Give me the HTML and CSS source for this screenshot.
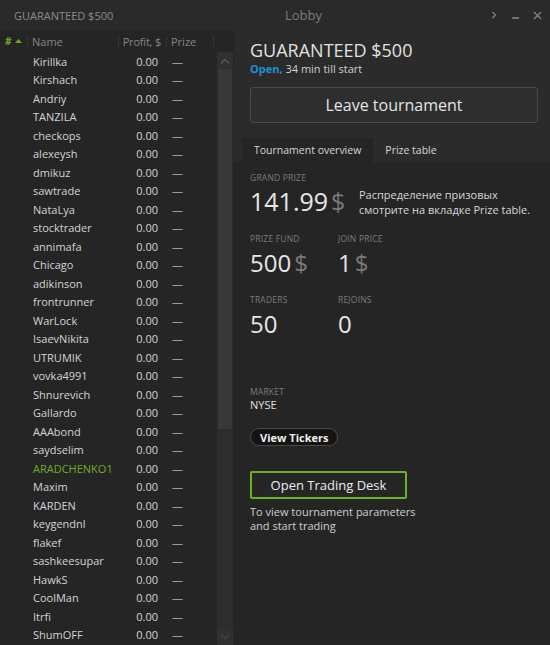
FILE: index.html
```html
<!DOCTYPE html>
<html>
<head>
<meta charset="utf-8">
<link rel="stylesheet" href="styles.css">
</head>
<body>
<div class="window">
  <div class="titlebar">
    <div class="tb-left">GUARANTEED $500</div>
    <div class="tb-center">Lobby</div>
    <div class="tb-icons">
      <svg width="8" height="8" viewBox="0 0 8 8"><path d="M2.5 1 L5.5 4 L2.5 7" fill="none" stroke="#8a8a8a" stroke-width="1.1"/></svg>
      <svg width="9" height="8" viewBox="0 0 9 8"><path d="M1 7 H8" stroke="#8a8a8a" stroke-width="1.5"/></svg>
      <svg width="9" height="9" viewBox="0 0 9 9"><path d="M1 1 L8 8 M8 1 L1 8" stroke="#8a8a8a" stroke-width="1.1"/></svg>
    </div>
  </div>
  <div class="main">
    <div class="left">
      <div class="thead">
        <span class="hash">#</span>
        <svg class="sort" width="7" height="4" viewBox="0 0 7 4"><path d="M0 4 L3.5 0 L7 4 Z" fill="#6aa824"/></svg>
        <span class="sep s1"></span>
        <span class="h-name">Name</span>
        <span class="sep s2"></span>
        <span class="h-profit">Profit, $</span>
        <span class="sep s3"></span>
        <span class="h-prize">Prize</span>
        <span class="sep s4"></span>
      </div>
      <div class="tbody">
        <div class="rows">
          <div class="row"><span class="n">Kirillka</span><span class="p">0.00</span><span class="d">—</span></div>
          <div class="row"><span class="n">Kirshach</span><span class="p">0.00</span><span class="d">—</span></div>
          <div class="row"><span class="n">Andriy</span><span class="p">0.00</span><span class="d">—</span></div>
          <div class="row"><span class="n">TANZILA</span><span class="p">0.00</span><span class="d">—</span></div>
          <div class="row"><span class="n">checkops</span><span class="p">0.00</span><span class="d">—</span></div>
          <div class="row"><span class="n">alexeysh</span><span class="p">0.00</span><span class="d">—</span></div>
          <div class="row"><span class="n">dmikuz</span><span class="p">0.00</span><span class="d">—</span></div>
          <div class="row"><span class="n">sawtrade</span><span class="p">0.00</span><span class="d">—</span></div>
          <div class="row"><span class="n">NataLya</span><span class="p">0.00</span><span class="d">—</span></div>
          <div class="row"><span class="n">stocktrader</span><span class="p">0.00</span><span class="d">—</span></div>
          <div class="row"><span class="n">annimafa</span><span class="p">0.00</span><span class="d">—</span></div>
          <div class="row"><span class="n">Chicago</span><span class="p">0.00</span><span class="d">—</span></div>
          <div class="row"><span class="n">adikinson</span><span class="p">0.00</span><span class="d">—</span></div>
          <div class="row"><span class="n">frontrunner</span><span class="p">0.00</span><span class="d">—</span></div>
          <div class="row"><span class="n">WarLock</span><span class="p">0.00</span><span class="d">—</span></div>
          <div class="row"><span class="n">IsaevNikita</span><span class="p">0.00</span><span class="d">—</span></div>
          <div class="row"><span class="n">UTRUMIK</span><span class="p">0.00</span><span class="d">—</span></div>
          <div class="row"><span class="n">vovka4991</span><span class="p">0.00</span><span class="d">—</span></div>
          <div class="row"><span class="n">Shnurevich</span><span class="p">0.00</span><span class="d">—</span></div>
          <div class="row"><span class="n">Gallardo</span><span class="p">0.00</span><span class="d">—</span></div>
          <div class="row"><span class="n">AAAbond</span><span class="p">0.00</span><span class="d">—</span></div>
          <div class="row"><span class="n">saydselim</span><span class="p">0.00</span><span class="d">—</span></div>
          <div class="row me"><span class="n">ARADCHENKO1</span><span class="p">0.00</span><span class="d">—</span></div>
          <div class="row"><span class="n">Maxim</span><span class="p">0.00</span><span class="d">—</span></div>
          <div class="row"><span class="n">KARDEN</span><span class="p">0.00</span><span class="d">—</span></div>
          <div class="row"><span class="n">keygendnl</span><span class="p">0.00</span><span class="d">—</span></div>
          <div class="row"><span class="n">flakef</span><span class="p">0.00</span><span class="d">—</span></div>
          <div class="row"><span class="n">sashkeesupar</span><span class="p">0.00</span><span class="d">—</span></div>
          <div class="row"><span class="n">HawkS</span><span class="p">0.00</span><span class="d">—</span></div>
          <div class="row"><span class="n">CoolMan</span><span class="p">0.00</span><span class="d">—</span></div>
          <div class="row"><span class="n">Itrfi</span><span class="p">0.00</span><span class="d">—</span></div>
          <div class="row"><span class="n">ShumOFF</span><span class="p">0.00</span><span class="d">—</span></div>
        </div>
        <div class="scrollbar">
          <div class="sb-btn"><svg width="10" height="6" viewBox="0 0 10 6"><path d="M1 5.5 L5 1.5 L9 5.5" fill="none" stroke="#555" stroke-width="1.6"/></svg></div>
          <div class="sb-thumb"></div>
          <div class="sb-track"></div>
          <div class="sb-btn"><svg width="10" height="6" viewBox="0 0 10 6"><path d="M1 0.5 L5 4.5 L9 0.5" fill="none" stroke="#444" stroke-width="1.6"/></svg></div>
        </div>
      </div>
    </div>
    <div class="right">
      <div class="top">
        <h1 class="title">GUARANTEED $500</h1>
        <div class="status"><span class="open">Open,</span> 34 min till start</div>
        <button class="leave">Leave tournament</button>
        <div class="tabs">
          <div class="tab active">Tournament overview</div>
          <div class="tab">Prize table</div>
        </div>
      </div>
      <div class="content">
        <div class="label">GRAND PRIZE</div>
        <div class="grand">
          <div class="big">141.99<span class="cur">$</span></div>
          <div class="note">Распределение призовых<br>смотрите на вкладке Prize table.</div>
        </div>
        <div class="stats">
          <div class="stat"><div class="label">PRIZE FUND</div><div class="val">500<span class="cur">$</span></div></div>
          <div class="stat"><div class="label">JOIN PRICE</div><div class="val">1<span class="cur">$</span></div></div>
          <div class="stat"><div class="label">TRADERS</div><div class="val">50</div></div>
          <div class="stat"><div class="label">REJOINS</div><div class="val">0</div></div>
        </div>
        <div class="label market">MARKET</div>
        <div class="market-val">NYSE</div>
        <button class="tickers">View Tickers</button>
        <button class="desk">Open Trading Desk</button>
        <div class="hint">To view tournament parameters<br>and start trading</div>
      </div>
    </div>
  </div>
</div>
</body>
</html>
```
FILE: styles.css
```css
* { box-sizing: border-box; }
html, body { margin: 0; padding: 0; }
body {
  width: 550px;
  height: 645px;
  overflow: hidden;
  background: #252525;
  font-family: "Open Sans", "Noto Sans", sans-serif;
  color: #d8d8d8;
}
.window { display: flex; flex-direction: column; height: 645px; }
.titlebar {
  height: 30px;
  background: #2a2a2a;
  display: flex;
  align-items: center;
  padding: 0 0 0 14px;
}
.tb-left { font-size: 11px; color: #8a8a8a; width: 140px; }
.tb-center { font-size: 13px; color: #7a7a7a; flex: 1; padding-left: 131px; }
.tb-icons { display: flex; align-items: center; gap: 13px; padding-right: 8px; }
.main { flex: 1; display: flex; min-height: 0; }
.left { width: 234px; background: #252525; display: flex; flex-direction: column; }
.thead {
  height: 22px;
  display: flex;
  align-items: center;
  font-size: 11px;
  color: #858585;
  padding-left: 5px;
  white-space: nowrap;
}
.hash { color: #6aa824; font-weight: bold; font-size: 10px; width: 10px; }
.sort { margin-right: 5px; }
.sep { width: 1px; height: 9px; border-left: 1px dotted #4a4a4a; }
.s1 { margin-right: 4px; }
.h-name { width: 86px; }
.h-profit { width: 42px; text-align: right; letter-spacing: -0.2px; }
.s3 { margin-left: 5px; }
.h-prize { padding-left: 4px; width: 46px; }
.tbody { flex: 1; display: flex; min-height: 0; }
.rows { flex: 1; font-size: 11px; }
.row {
  height: 18.5px;
  display: flex;
  align-items: center;
  color: #d4d4d4;
}
.row .n { width: 124px; padding-left: 33px; }
.row .p { width: 34px; text-align: right; }
.row .d { padding-left: 14px; color: #9a9a9a; }
.row.me .n { color: #6fae23; }
.scrollbar {
  width: 16px;
  margin-right: 1px;
  background: #2d2d2d;
  display: flex;
  flex-direction: column;
}
.sb-btn { height: 17px; display: flex; align-items: center; justify-content: center; background: #303030; }
.sb-thumb { height: 360px; margin: 0 1px; background: #383838; }
.sb-track { flex: 1; }
.right { flex: 1; background: #2b2b2b; display: flex; flex-direction: column; }
.top { padding: 10px 12px 0 16px; }
.title { margin: 0; font-size: 18px; font-weight: normal; color: #e2e2e2; line-height: 21px; }
.status { font-size: 11px; color: #d0d0d0; line-height: 14px; margin-top: 1px; }
.open { color: #1e8fd6; font-weight: bold; }
.leave {
  display: block;
  width: 288px;
  height: 36px;
  margin-top: 11px;
  background: #2e2e2e;
  border: 1px solid #4a4a4a;
  border-radius: 3px;
  color: #e4e4e4;
  font-family: inherit;
  font-size: 16px;
}
.tabs { display: flex; margin: 15px 0 0 -8px; height: 24px; }
.tab { font-size: 10.5px; color: #d6d6d6; padding: 0 12px; display: flex; align-items: center; }
.tab.active { background: #252525; }
.content { flex: 1; background: #252525; padding: 11px 12px 0 16px; }
.label { font-size: 8.5px; color: #7c7c7c; letter-spacing: 0.2px; line-height: 10px; }
.grand { display: flex; align-items: flex-start; margin-top: 3px; }
.big { font-size: 25px; color: #e6e6e6; line-height: 30px; width: 109px; }
.cur { color: #7a7a7a; margin-left: 3px; }
.note { font-size: 11px; line-height: 15px; color: #d6d6d6; margin-top: 1px; }
.stats { display: grid; grid-template-columns: 88px 1fr; row-gap: 18px; margin-top: 17px; }
.val { font-size: 24px; line-height: 28px; color: #e6e6e6; margin-top: 5px; }
.market { margin-top: 49px; }
.market-val { font-size: 11px; color: #e0e0e0; margin-top: 0; }
.tickers {
  display: block;
  margin-top: 16px;
  height: 18px;
  padding: 0 9px;
  background: #141414;
  border: 1px solid #4a4a4a;
  border-radius: 9px;
  color: #f0f0f0;
  font-family: inherit;
  font-weight: bold;
  font-size: 11px;
}
.desk {
  display: block;
  margin-top: 25px;
  width: 157px;
  height: 28px;
  background: #262626;
  border: 2px solid #6cb12a;
  border-radius: 2px;
  color: #ececec;
  font-family: inherit;
  font-size: 13px;
}
.hint { font-size: 11px; color: #cfcfcf; line-height: 14px; margin-top: 6px; }
```
